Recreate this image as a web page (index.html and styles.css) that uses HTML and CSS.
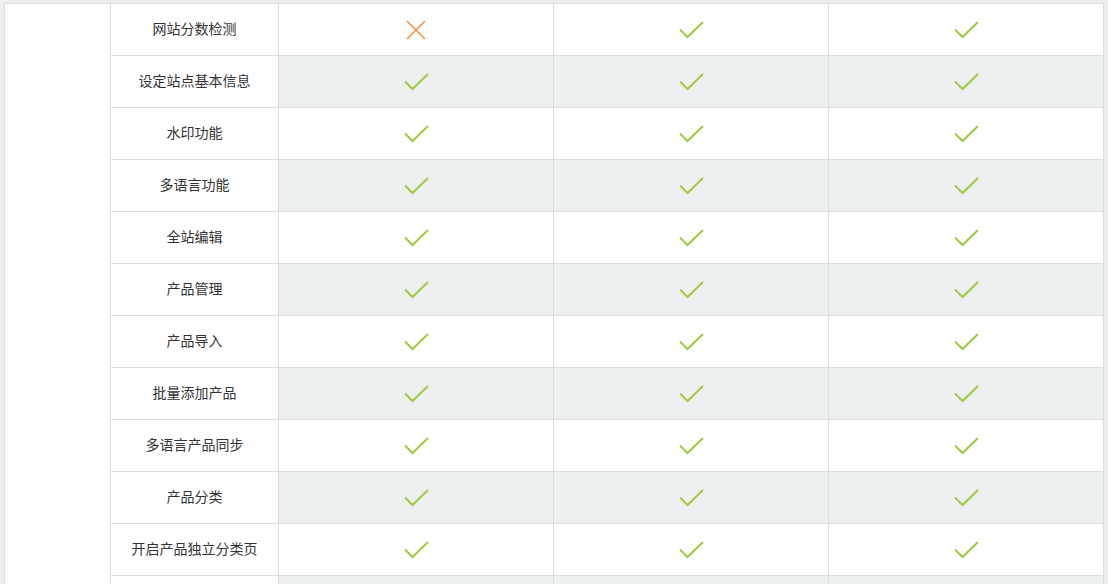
FILE: index.html
```html
<!DOCTYPE html>
<html lang="zh-CN">
<head>
<meta charset="utf-8">
<title>功能对比</title>
<link rel="stylesheet" href="styles.css">
</head>
<body>
<div class="panel">
  <div class="spacer"></div>
  <div class="table">
    <div class="cell label">网站分数检测</div>
    <div class="cell"><svg class="cross" viewBox="0 0 20 20"><path d="M1 1L19 19M19 1L1 19"/></svg></div>
    <div class="cell"><svg class="check" viewBox="0 0 25 18"><path d="M1 8.5L8.5 16L24 1"/></svg></div>
    <div class="cell"><svg class="check" viewBox="0 0 25 18"><path d="M1 8.5L8.5 16L24 1"/></svg></div>

    <div class="cell label">设定站点基本信息</div>
    <div class="cell alt"><svg class="check" viewBox="0 0 25 18"><path d="M1 8.5L8.5 16L24 1"/></svg></div>
    <div class="cell alt"><svg class="check" viewBox="0 0 25 18"><path d="M1 8.5L8.5 16L24 1"/></svg></div>
    <div class="cell alt"><svg class="check" viewBox="0 0 25 18"><path d="M1 8.5L8.5 16L24 1"/></svg></div>

    <div class="cell label">水印功能</div>
    <div class="cell"><svg class="check" viewBox="0 0 25 18"><path d="M1 8.5L8.5 16L24 1"/></svg></div>
    <div class="cell"><svg class="check" viewBox="0 0 25 18"><path d="M1 8.5L8.5 16L24 1"/></svg></div>
    <div class="cell"><svg class="check" viewBox="0 0 25 18"><path d="M1 8.5L8.5 16L24 1"/></svg></div>

    <div class="cell label">多语言功能</div>
    <div class="cell alt"><svg class="check" viewBox="0 0 25 18"><path d="M1 8.5L8.5 16L24 1"/></svg></div>
    <div class="cell alt"><svg class="check" viewBox="0 0 25 18"><path d="M1 8.5L8.5 16L24 1"/></svg></div>
    <div class="cell alt"><svg class="check" viewBox="0 0 25 18"><path d="M1 8.5L8.5 16L24 1"/></svg></div>

    <div class="cell label">全站编辑</div>
    <div class="cell"><svg class="check" viewBox="0 0 25 18"><path d="M1 8.5L8.5 16L24 1"/></svg></div>
    <div class="cell"><svg class="check" viewBox="0 0 25 18"><path d="M1 8.5L8.5 16L24 1"/></svg></div>
    <div class="cell"><svg class="check" viewBox="0 0 25 18"><path d="M1 8.5L8.5 16L24 1"/></svg></div>

    <div class="cell label">产品管理</div>
    <div class="cell alt"><svg class="check" viewBox="0 0 25 18"><path d="M1 8.5L8.5 16L24 1"/></svg></div>
    <div class="cell alt"><svg class="check" viewBox="0 0 25 18"><path d="M1 8.5L8.5 16L24 1"/></svg></div>
    <div class="cell alt"><svg class="check" viewBox="0 0 25 18"><path d="M1 8.5L8.5 16L24 1"/></svg></div>

    <div class="cell label">产品导入</div>
    <div class="cell"><svg class="check" viewBox="0 0 25 18"><path d="M1 8.5L8.5 16L24 1"/></svg></div>
    <div class="cell"><svg class="check" viewBox="0 0 25 18"><path d="M1 8.5L8.5 16L24 1"/></svg></div>
    <div class="cell"><svg class="check" viewBox="0 0 25 18"><path d="M1 8.5L8.5 16L24 1"/></svg></div>

    <div class="cell label">批量添加产品</div>
    <div class="cell alt"><svg class="check" viewBox="0 0 25 18"><path d="M1 8.5L8.5 16L24 1"/></svg></div>
    <div class="cell alt"><svg class="check" viewBox="0 0 25 18"><path d="M1 8.5L8.5 16L24 1"/></svg></div>
    <div class="cell alt"><svg class="check" viewBox="0 0 25 18"><path d="M1 8.5L8.5 16L24 1"/></svg></div>

    <div class="cell label">多语言产品同步</div>
    <div class="cell"><svg class="check" viewBox="0 0 25 18"><path d="M1 8.5L8.5 16L24 1"/></svg></div>
    <div class="cell"><svg class="check" viewBox="0 0 25 18"><path d="M1 8.5L8.5 16L24 1"/></svg></div>
    <div class="cell"><svg class="check" viewBox="0 0 25 18"><path d="M1 8.5L8.5 16L24 1"/></svg></div>

    <div class="cell label">产品分类</div>
    <div class="cell alt"><svg class="check" viewBox="0 0 25 18"><path d="M1 8.5L8.5 16L24 1"/></svg></div>
    <div class="cell alt"><svg class="check" viewBox="0 0 25 18"><path d="M1 8.5L8.5 16L24 1"/></svg></div>
    <div class="cell alt"><svg class="check" viewBox="0 0 25 18"><path d="M1 8.5L8.5 16L24 1"/></svg></div>

    <div class="cell label">开启产品独立分类页</div>
    <div class="cell"><svg class="check" viewBox="0 0 25 18"><path d="M1 8.5L8.5 16L24 1"/></svg></div>
    <div class="cell"><svg class="check" viewBox="0 0 25 18"><path d="M1 8.5L8.5 16L24 1"/></svg></div>
    <div class="cell"><svg class="check" viewBox="0 0 25 18"><path d="M1 8.5L8.5 16L24 1"/></svg></div>

    <div class="cell label"></div>
    <div class="cell alt"></div>
    <div class="cell alt"></div>
    <div class="cell alt"></div>
  </div>
</div>
</body>
</html>
```
FILE: styles.css
```css
html, body {
  margin: 0;
  padding: 0;
  background: #eeeeee;
  overflow: hidden;
}
body {
  padding: 3px 0 0 4px;
  font-family: "Noto Sans CJK SC", "Noto Sans", sans-serif;
  font-size: 14px;
  color: #333333;
}
.panel {
  display: flex;
  width: 1100px;
  box-sizing: border-box;
  background: #ffffff;
  border-top: 1px solid #dddddd;
  border-left: 1px solid #dddddd;
}
.spacer {
  width: 105px;
  flex: none;
}
.table {
  display: grid;
  grid-template-columns: 168px repeat(3, 275px);
  grid-auto-rows: 52px;
  border-left: 1px solid #dddddd;
}
.cell {
  box-sizing: border-box;
  border-right: 1px solid #dddddd;
  border-bottom: 1px solid #dddddd;
  display: flex;
  align-items: center;
  justify-content: center;
  background: #ffffff;
}
.cell.alt {
  background: #edf0f0;
}
.label {
  line-height: 1;
  padding-bottom: 4px;
}
.check {
  width: 25px;
  height: 18px;
  fill: none;
  stroke: #9dcb3f;
  stroke-width: 2;
}
.cross {
  width: 20px;
  height: 20px;
  fill: none;
  stroke: #f7933d;
  stroke-width: 1.6;
}
```
